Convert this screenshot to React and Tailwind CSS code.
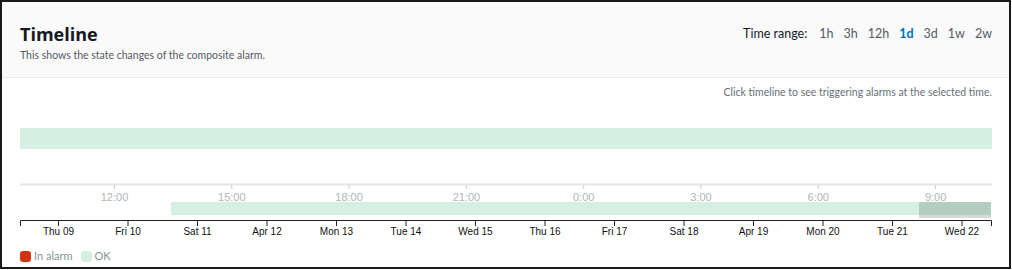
import React from "react";

const hours = ["12:00", "15:00", "18:00", "21:00", "0:00", "3:00", "6:00", "9:00"];
const days = [
  "Thu 09", "Fri 10", "Sat 11", "Apr 12", "Mon 13", "Tue 14", "Wed 15",
  "Thu 16", "Fri 17", "Sat 18", "Apr 19", "Mon 20", "Tue 21", "Wed 22",
];
const ranges = ["1h", "3h", "12h", "1d", "3d", "1w", "2w"];

const TimelineChart = () => {
  return (
    <svg width="972" height="140" viewBox="0 0 972 140" className="block">
      {/* main state band */}
      <rect x="0" y="28" width="972" height="21" fill="#d5f0e2" />

      {/* top hour axis */}
      <line x1="0" x2="972" y1="84.5" y2="84.5" stroke="#e3e6e8" strokeWidth="2" />
      {hours.map((h, i) => {
        const x = 94.5 + i * 117.3;
        return (
          <g key={h}>
            <line x1={x} x2={x} y1="85" y2="89" stroke="#c6cccf" />
            <text
              x={x}
              y="101"
              textAnchor="middle"
              fontSize="11"
              fill="#aab7b8"
              fontFamily="'Liberation Sans', Arial, sans-serif"
            >
              {h}
            </text>
          </g>
        );
      })}

      {/* brush band */}
      <rect x="151" y="102" width="748" height="13" fill="#d5f0e2" />
      <rect x="899" y="102" width="72" height="13" fill="#d5f0e2" />
      <rect x="899" y="102" width="72" height="16" fill="#000" fillOpacity="0.15" />

      {/* bottom day axis */}
      <path d="M0.5,126V120.5H971.5V126" fill="none" stroke="#222" />
      {days.map((d, i) => {
        const x = 38.5 + i * 69.5;
        return (
          <g key={d}>
            <line x1={x} x2={x} y1="120" y2="126" stroke="#222" />
            <text
              x={x}
              y="135"
              textAnchor="middle"
              fontSize="10"
              fill="#111"
              fontFamily="'Liberation Sans', Arial, sans-serif"
            >
              {d}
            </text>
          </g>
        );
      })}
    </svg>
  );
};

const App = () => {
  return (
    <div className="w-[1012px] h-[270px] bg-white font-['Lato',sans-serif]">
      <div className="w-[1011px] h-[269px] border-2 border-[#1a1a1a] flex flex-col">
        {/* Header */}
        <header className="h-[76px] bg-[#fafafa] border-b border-[#eaeded] pl-[18px] pr-[17px] flex justify-between">
          <div className="pt-[21px]">
            <h2 className="text-[18px] leading-[22px] font-bold text-[#16191f] font-['Open_Sans',sans-serif]">
              Timeline
            </h2>
            <p className="text-[10.5px] leading-[16px] text-[#545b64] mt-[2px]">
              This shows the state changes of the composite alarm.
            </p>
          </div>
          <div className="pt-[23px] flex items-start text-[12.5px] leading-[18px] text-[#16191f]">
            <span className="mr-[12px]">Time range:</span>
            <div className="flex gap-[10px]">
              {ranges.map((r) => (
                <span
                  key={r}
                  className={r === "1d" ? "font-bold text-[#0073bb]" : "text-[#545b64]"}
                >
                  {r}
                </span>
              ))}
            </div>
          </div>
        </header>

        {/* Body */}
        <div className="pl-[18px] pr-[17px] pt-[6px]">
          <p className="text-right text-[10.5px] leading-[16px] text-[#687078]">
            Click timeline to see triggering alarms at the selected time.
          </p>
          <TimelineChart />
          <div className="flex items-center mt-[8px] text-[11px] leading-[16px] text-[#879596]">
            <span className="w-[11px] h-[11px] rounded-[3px] bg-[#d13212] mr-[3px]" />
            <span>In alarm</span>
            <span className="w-[11px] h-[11px] rounded-[3px] bg-[#d5f0e2] ml-[8px] mr-[3px]" />
            <span>OK</span>
          </div>
        </div>
      </div>
    </div>
  );
};

export default App;
